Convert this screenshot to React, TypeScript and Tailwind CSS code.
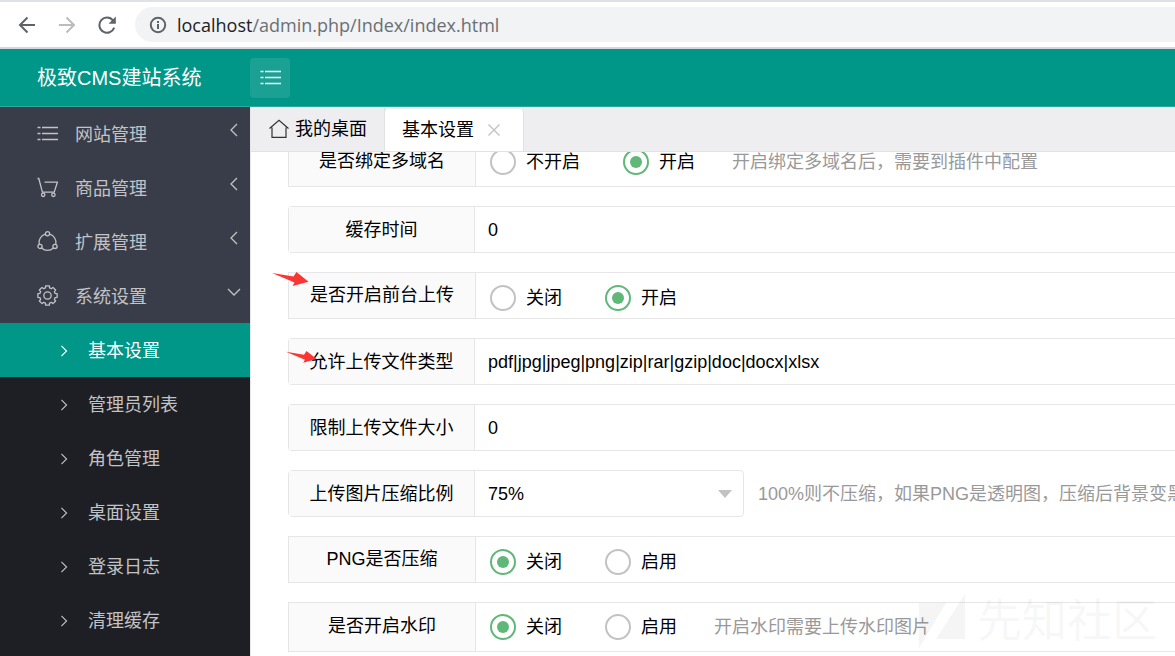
import React from 'react';

type IconProps = { className?: string };

const BackIcon = ({ className }: IconProps) => (
  <svg viewBox="0 0 18 18" className={className} fill="none" stroke="currentColor" strokeWidth="2">
    <path d="M17 9H2.5M9.5 1.5 2 9l7.5 7.5" />
  </svg>
);

const ReloadIcon = ({ className }: IconProps) => (
  <svg viewBox="0 0 18 18" className={className} fill="none" stroke="currentColor" strokeWidth="2">
    <path d="M15 4.4A7.6 7.6 0 1 0 16.2 11.6" />
    <path d="M17.8 0.6v7.2h-7.2z" fill="currentColor" stroke="none" />
  </svg>
);

const InfoIcon = ({ className }: IconProps) => (
  <svg viewBox="0 0 18 18" className={className} fill="none" stroke="currentColor" strokeWidth="2">
    <circle cx="9" cy="9" r="7.2" />
    <path d="M9 8v5M9 5v2" />
  </svg>
);

const ListIcon = ({ className }: IconProps) => (
  <svg viewBox="0 0 21 21" className={className} fill="none" stroke="currentColor" strokeWidth="1.4">
    <path d="M0.5 4.5h3M5 4.5h16M0.5 10.5h3M5 10.5h16M0.5 16.5h3M5 16.5h16" />
  </svg>
);

const CartIcon = ({ className }: IconProps) => (
  <svg viewBox="0 0 21 21" className={className} fill="none" stroke="currentColor" strokeWidth="1.3">
    <path d="M0.5 1.5h1.3l3.6 13.6h11.8L20.4 5.2H7.5" />
    <circle cx="6.2" cy="17.8" r="1.7" />
    <circle cx="16.4" cy="17.8" r="1.7" />
  </svg>
);

const ShareIcon = ({ className }: IconProps) => (
  <svg viewBox="0 0 21 21" className={className} fill="none" stroke="currentColor" strokeWidth="1.3">
    <circle cx="10.5" cy="2.8" r="2.1" />
    <circle cx="3" cy="15.4" r="2.1" />
    <circle cx="18" cy="15.4" r="2.1" />
    <path d="M8.4 3.2A8.6 8.6 0 0 0 2.2 13.3M12.6 3.2a8.6 8.6 0 0 1 6.2 10.1M4.6 17a8.6 8.6 0 0 0 11.8 0" />
  </svg>
);

// eight teeth, four corners for each
const gearPoints = Array.from({ length: 8 }, (_, i) =>
  [
    [-11, 9.8],
    [11, 9.8],
    [15, 7.9],
    [30, 7.9],
  ].map(([offset, radius]) => {
    const angle = ((i * 45 + offset) * Math.PI) / 180;
    return `${10.5 + radius * Math.sin(angle)},${10.5 - radius * Math.cos(angle)}`;
  })
)
  .flat()
  .join(' ');

const GearIcon = ({ className }: IconProps) => (
  <svg viewBox="0 0 21 21" className={className} fill="none" stroke="currentColor" strokeWidth="1.3" strokeLinejoin="round">
    <polygon points={gearPoints} />
    <circle cx="10.5" cy="10.5" r="3.7" />
  </svg>
);

const HomeIcon = ({ className }: IconProps) => (
  <svg viewBox="0 0 20 20" className={className} fill="none" stroke="currentColor" strokeWidth="1.2">
    <path d="M0.5 9.5 10 1.4l9.5 8.1M3 8.5v9.9h14V8.5" />
  </svg>
);

const ChevronIcon = ({ className }: IconProps) => (
  <svg viewBox="0 0 8 14" className={className} fill="none" stroke="currentColor" strokeWidth="1.3">
    <path d="M1 1l6 6-6 6" />
  </svg>
);

const CloseIcon = ({ className }: IconProps) => (
  <svg viewBox="0 0 12 12" className={className} fill="none" stroke="currentColor" strokeWidth="1.4">
    <path d="M0.5 0.5l11 11M11.5 0.5l-11 11" />
  </svg>
);

const Arrow = ({ className }: IconProps) => (
  <svg viewBox="0 0 37 15" className={className} fill="#fb3534">
    <path d="M0 1 21.5 4.6 24.5 0 36.5 9.7 20.5 14 22.5 10.5z" />
  </svg>
);

const menu = [
  { title: '网站管理', icon: ListIcon, open: false },
  { title: '商品管理', icon: CartIcon, open: false },
  { title: '扩展管理', icon: ShareIcon, open: false },
  { title: '系统设置', icon: GearIcon, open: true },
];

const subMenu = ['基本设置', '管理员列表', '角色管理', '桌面设置', '登录日志', '清理缓存'];

const labelClass = 'relative flex shrink-0 items-center justify-center border-r border-[#e6e6e6] bg-[#fafafa]';

type RadioRowProps = {
  name: string;
  title: string;
  options: string[];
  value: string;
  hint?: string;
  arrow?: boolean;
};

const RadioRow: React.FC<RadioRowProps> = ({ name, title, options, value, hint, arrow }) => (
  <div
    role="radiogroup"
    aria-labelledby={name}
    className={`flex shrink-0 border-y border-l border-[#e6e6e6] ${hint ? 'h-[50px]' : 'h-[47px]'}`}
  >
    <div id={name} className={`${labelClass} w-[187px] pb-0.5`}>
      {title}
      {arrow && <Arrow className="absolute -top-px -left-[17px] w-[37px]" />}
    </div>
    <div className={`flex items-center gap-[43px] pl-3.5 whitespace-nowrap ${hint ? '' : 'pt-1'}`}>
      {options.map((option) => (
        <label key={option} className="flex items-center gap-2.5">
          <input
            type="radio"
            name={name}
            defaultChecked={option === value}
            className="grid size-[26px] appearance-none place-content-center rounded-full border-2 border-[#c2c2c2] before:size-3 before:rounded-full checked:border-[#5fb878] checked:before:bg-[#5fb878]"
          />
          {option}
        </label>
      ))}
      {hint && <span className="-ml-1.5 text-[#999]">{hint}</span>}
    </div>
  </div>
);

type InputRowProps = { name: string; title: string; value: string; arrow?: boolean };

const InputRow: React.FC<InputRowProps> = ({ name, title, value, arrow }) => (
  <div className="flex h-[47px] shrink-0 rounded-l-sm border-y border-l border-[#e6e6e6]">
    <label htmlFor={name} className={`${labelClass} w-[186px]`}>
      {title}
      {arrow && <Arrow className="absolute top-3 -left-[3px] w-[31px]" />}
    </label>
    <input id={name} type="text" defaultValue={value} className="min-w-0 flex-1 px-[13px] outline-none" />
  </div>
);

const App: React.FC = () => {
  return (
    <div className="relative flex h-screen flex-col overflow-hidden bg-white font-['Liberation_Sans','Noto_Sans_CJK_SC',sans-serif] text-lg leading-6 text-black">
      <div className="flex h-[49px] shrink-0 items-center border-t-2 border-b-2 border-t-[#dee1e6] border-b-[#d5d7da] pl-[18px] text-[#5f6368]">
        <button type="button" aria-label="Back">
          <BackIcon className="size-[18px]" />
        </button>
        <button type="button" aria-label="Forward" className="ml-[22px] text-[#babcbe]">
          <BackIcon className="size-[18px] rotate-180" />
        </button>
        <button type="button" aria-label="Reload" className="ml-[22px]">
          <ReloadIcon className="size-[18px]" />
        </button>
        <div className="ml-[19px] flex h-[35px] flex-1 items-center rounded-l-full bg-[#f1f3f4] pl-3.5 font-['Open_Sans',sans-serif]">
          <InfoIcon className="size-[18px]" />
          <span className="ml-2.5 text-[#202124]">
            localhost<span className="text-[#6b6f73]">/admin.php/Index/index.html</span>
          </span>
        </div>
      </div>

      <header className="flex h-[58px] shrink-0 items-center border-b border-[#2ea79b] bg-[#009688] text-white">
        <h1 className="w-[250px] pl-[37px] text-xl">极致CMS建站系统</h1>
        <button type="button" aria-label="切换菜单" className="flex size-10 items-center justify-center rounded bg-white/10">
          <ListIcon className="size-[21px]" />
        </button>
      </header>

      <div className="flex min-h-0 flex-1">
        <nav className="w-[250px] shrink-0 overflow-hidden bg-[#1e1f24] text-[#c2c3c6]">
          {menu.map((item) => (
            <a key={item.title} href="#" className="flex h-[54px] items-center bg-[#393d49] pr-2 pl-[37px]">
              <item.icon className="mr-[17px] mb-0.5 size-[21px]" />
              <span className="flex-1 pt-0.5">{item.title}</span>
              <span className="flex w-4 justify-center pb-2">
                <ChevronIcon className={item.open ? 'h-3.5 rotate-90' : 'h-3.5 rotate-180'} />
              </span>
            </a>
          ))}
          {subMenu.map((title) => (
            <a
              key={title}
              href="#"
              className={`flex h-[54px] items-center gap-5 pt-0.5 pl-[60px] ${title === '基本设置' ? 'bg-[#009688] text-white' : ''}`}
            >
              <ChevronIcon className="h-3 w-2" />
              {title}
            </a>
          ))}
        </nav>

        <main className="flex min-w-0 flex-1 flex-col border-l border-[#e6e6e6]">
          <div className="flex h-[45px] shrink-0 border-b border-[#e2e2e2] bg-[#eeeef0]">
            <button type="button" className="flex items-center gap-1.5 border-r border-[#e2e2e2] px-[18px] pr-[17px]">
              <HomeIcon className="size-5 text-[#333]" />
              我的桌面
            </button>
            <div className="mt-0.5 flex items-center gap-3.5 rounded-t-sm border-r border-[#e2e2e2] bg-white pr-[23px] pl-[17px]">
              <span>基本设置</span>
              <button type="button" aria-label="关闭标签">
                <CloseIcon className="size-3 text-[#c2c2c2]" />
              </button>
            </div>
          </div>

          <div className="min-h-0 flex-1 overflow-hidden">
            <form className="-mt-[15px] flex flex-col gap-[19px] pl-[37px]">
              <RadioRow
                name="domain"
                title="是否绑定多域名"
                options={['不开启', '开启']}
                value="开启"
                hint="开启绑定多域名后，需要到插件中配置"
              />
              <InputRow name="cache" title="缓存时间" value="0" />
              <RadioRow name="upload" title="是否开启前台上传" options={['关闭', '开启']} value="开启" arrow />
              <InputRow name="types" title="允许上传文件类型" value="pdf|jpg|jpeg|png|zip|rar|gzip|doc|docx|xlsx" arrow />
              <InputRow name="size" title="限制上传文件大小" value="0" />
              <div className="flex h-[47px] shrink-0 items-center gap-3.5 whitespace-nowrap">
                <div className="flex h-full shrink-0 rounded-sm border border-[#e6e6e6]">
                  <label htmlFor="ratio" className={`${labelClass} w-[186px]`}>
                    上传图片压缩比例
                  </label>
                  <div className="relative w-[268px]">
                    <select id="ratio" defaultValue="75%" className="size-full appearance-none px-[13px] outline-none">
                      <option>75%</option>
                      <option>100%</option>
                    </select>
                    <span className="pointer-events-none absolute top-[19px] right-[11px] border-x-[7px] border-t-8 border-x-transparent border-t-[#c2c2c2]" />
                  </div>
                </div>
                <span className="text-[#999]">100%则不压缩，如果PNG是透明图，压缩后背景变黑色</span>
              </div>
              <RadioRow name="png" title="PNG是否压缩" options={['关闭', '启用']} value="关闭" />
              <RadioRow name="watermark" title="是否开启水印" options={['关闭', '启用']} value="关闭" hint="开启水印需要上传水印图片" />
            </form>
          </div>
        </main>
      </div>

      <div className="pointer-events-none absolute right-[18px] bottom-2 flex items-center gap-3 text-[#808080]/8">
        <svg viewBox="0 0 46 54" className="h-[54px]" fill="currentColor">
          <path d="M0 9h27L0 54zM46 0v45H17z" />
        </svg>
        <span className="text-[45px] leading-none">先知社区</span>
      </div>
    </div>
  );
};

export default App;
